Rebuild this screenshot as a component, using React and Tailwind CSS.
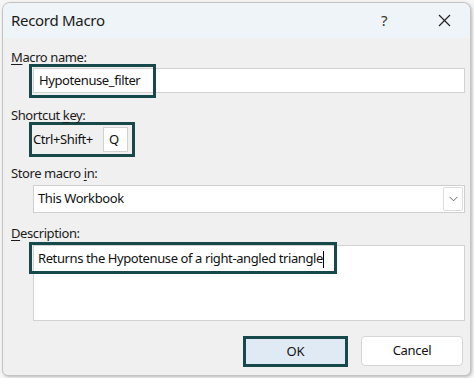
import React from 'react'

const font = { fontFamily: '"Segoe UI", "Noto Sans", sans-serif' }

function Label({ pre, u, post }) {
  return (
    <div className="h-4 pl-2 text-[13px] tracking-[-0.4px] leading-4 text-[#1b1b1b]">
      {pre}
      <span className="underline underline-offset-2">{u}</span>
      {post}
    </div>
  )
}

export default function App() {
  return (
    <div style={font} className="w-[474px] h-[378px] bg-[#f6f6f6] pt-[2px] pl-[2px] overflow-hidden">
      <div className="w-[469px] h-[374px] rounded-t-lg rounded-b-md border border-[#c4c4c4] bg-[#f0f0f0] shadow-[1px_1px_3px_rgba(0,0,0,0.25)] overflow-hidden">
        {/* title bar */}
        <div className="h-[35px] bg-[#eef4f7] flex items-center pl-2 pr-4 text-[#1a1a1a]">
          <div className="text-[15px] tracking-[-0.3px] flex-1">Record Macro</div>
          <div className="text-[15px] w-[14px] mr-[43px] text-[#333]">?</div>
          <svg width="13" height="13" viewBox="0 0 13 13" className="mr-[3px]">
            <path d="M1 1L12 12M12 1L1 12" stroke="#222" strokeWidth="1.2" />
          </svg>
        </div>

        <div className="mt-[11px]">
          <Label u="M" post="acro name:" />
          <div className="relative mt-[3px] ml-[30px] mr-[5px] h-[25px] bg-white border border-[#d2d2d2] flex items-center pl-[5px] text-[13px] tracking-[-0.4px] text-[#111]">
            Hypotenuse_filter
            <div className="absolute left-[-5px] top-[-5px] w-[127px] h-[34px] border-[3px] border-[#17494a]" />
          </div>
        </div>

        <div className="mt-[14px]">
          <Label pre="Shortcut " u="k" post="ey:" />
          <div className="-mt-[1px] ml-[26px] w-[106px] h-[35px] border-[3px] border-[#17494a] flex items-center pl-[1px] text-[13px] tracking-[-0.4px] text-[#111]">
            <span className="w-[70px]">Ctrl+Shift+</span>
            <div className="w-[25px] h-[25px] bg-white border border-[#d2d2d2] flex items-center pl-[5px]">Q</div>
          </div>
        </div>

        <div className="mt-[8px]">
          <Label pre="Store macro " u="i" post="n:" />
          <div className="mt-[4px] ml-[30px] mr-[5px] h-[28px] bg-white border border-[#cfcfcf] flex items-center pl-[4px] text-[13px] tracking-[-0.4px] text-[#111]">
            <span className="flex-1">This Workbook</span>
            <div className="w-[20px] h-[24px] mr-[1px] border border-[#dcdcdc] rounded-[2px] flex items-center justify-center">
              <svg width="9" height="6" viewBox="0 0 9 6">
                <path d="M0.5 0.8L4.5 4.8L8.5 0.8" fill="none" stroke="#666" strokeWidth="1" />
              </svg>
            </div>
          </div>
        </div>

        <div className="mt-[12px]">
          <Label u="D" post="escription:" />
          <div className="relative mt-[4px] ml-[30px] mr-[5px] h-[76px] bg-white border border-[#d2d2d2] pl-[4px] pt-[2px] text-[13px] tracking-[-0.4px] leading-5 text-[#111]">
            Returns the Hypotenuse of a right-angled triangle
            <span className="inline-block w-px h-[17px] bg-black align-middle" />
            <div className="absolute left-[-5px] top-[-4px] w-[308px] h-[32px] border-[3px] border-[#17494a]" />
          </div>
        </div>

        <div className="mt-[15px] flex justify-end gap-[13px] pr-[7px]">
          <div className="w-[105px] h-[31px] bg-[#dfeaf5] border-[3px] border-[#17494a] flex items-center justify-center text-[13px] text-[#111]">
            OK
          </div>
          <div className="w-[102px] h-[30px] bg-white border border-[#d6d6d6] rounded-[4px] flex items-center justify-center text-[13px] tracking-[-0.3px] text-[#111]">
            Cancel
          </div>
        </div>
      </div>
    </div>
  )
}
